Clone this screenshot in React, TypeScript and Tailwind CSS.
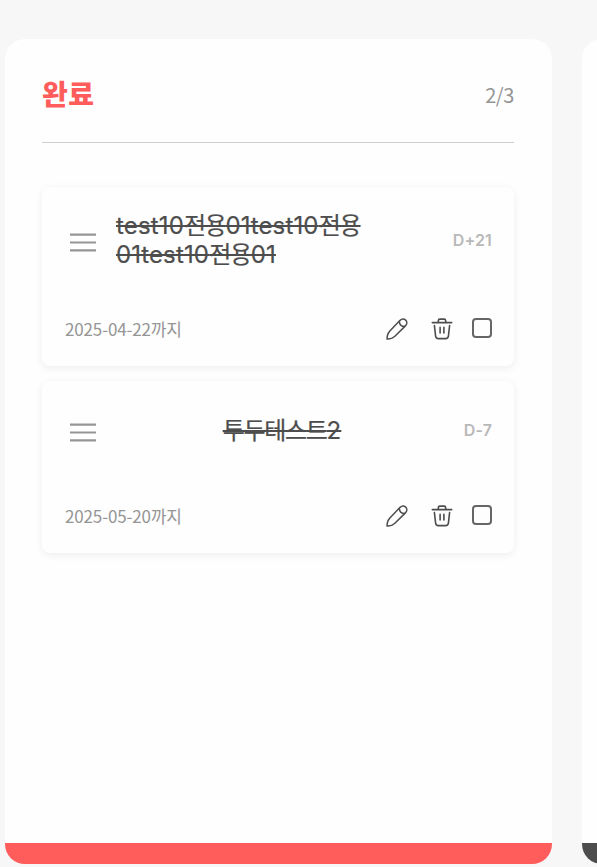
interface Todo {
  id: number;
  title: string;
  due: string;
  dday: string;
}

const todos: Todo[] = [
  { id: 1, title: 'test10전용01test10전용01test10전용01', due: '2025-04-22', dday: 'D+21' },
  { id: 2, title: '투두테스트2', due: '2025-05-20', dday: 'D-7' },
];

function MenuIcon() {
  return (
    <svg width="28" height="20" viewBox="0 0 28 20" fill="none" stroke="#959595" strokeWidth="2.2">
      <path d="M1 1.7h26M1 9.5h26M1 17.3h26" />
    </svg>
  );
}

function PencilIcon() {
  return (
    <svg width="24" height="24" viewBox="0 0 24 24" fill="none" stroke="#4d4d4d" strokeWidth="1.5" strokeLinejoin="round">
      <path d="M2 22c.1-2.700.5-5.500 2.400-7.400L14.800 3.600c1.900-1.900 4.200-2 5.900-.5 1.600 1.600 1.500 4-.3 5.800L9.900 19.300C7.900 21.300 5 22.200 2 22z" />
      <path d="M14.300 4.200c.1 3.200 2.400 5.300 5.600 5.300" />
    </svg>
  );
}

function TrashIcon() {
  return (
    <svg width="24" height="24" viewBox="0 0 24 24" fill="none" stroke="#4d4d4d" strokeWidth="1.6" strokeLinecap="round" strokeLinejoin="round">
      <path d="M2.300 5.600h19.400" />
      <path d="M8.300 5.300V3.700c0-1 .6-1.600 1.600-1.600h4.200c1 0 1.600.6 1.600 1.600v1.600" />
      <path d="M4.400 8.500l1.200 10.700c.2 1.700 1 2.400 2.700 2.400h7.400c1.700 0 2.500-.7 2.700-2.400l1.200-10.700" />
      <path d="M10.100 10.400v5.500M13.900 10.400v5.500" />
    </svg>
  );
}

// Hangul runs are set tighter than the latin ones
function TodoTitle({ text }: { text: string }) {
  return (
    <>
      {text.split(/([가-힣]+)/).map((part, i) =>
        i % 2 === 1 ? (
          <span key={i} className="tracking-[-1.3px]">
            {part}
          </span>
        ) : (
          part
        )
      )}
    </>
  );
}

function TodoCard({ todo }: { todo: Todo }) {
  return (
    <li className="rounded-lg bg-[#fefefe] px-[22px] pt-6 shadow-[0_2px_8px_rgba(0,0,0,0.07)]">
      <div className="flex min-h-[51px] items-center">
        <button className="mt-[5px] ml-[5px] shrink-0">
          <MenuIcon />
        </button>
        <div className="ml-[19px] flex w-[332px] shrink-0 justify-center">
          <p className="font-['Inter','Noto_Sans_CJK_KR',sans-serif] text-2xl leading-[29px] font-normal tracking-[0.15px] text-[#4d4d4d] line-through decoration-2 [-webkit-text-stroke:0.2px_#4d4d4d]">
            <TodoTitle text={todo.title} />
          </p>
        </div>
        <span className="ml-auto shrink-0 pb-px font-['Inter',sans-serif] text-base font-semibold tracking-[0.15px] text-[#b8b8b8]">
          {todo.dday}
        </span>
      </div>
      <div className="mt-12 flex h-[49px] items-start justify-between">
        <span className="ml-px text-[17px] leading-6 tracking-[-0.15px] text-[#959595]">{todo.due}까지</span>
        <div className="flex items-start">
          <button>
            <PencilIcon />
          </button>
          <button className="ml-[21px]">
            <TrashIcon />
          </button>
          <button className="mt-px ml-[18px] size-5 rounded-[4px] border-2 border-[#666]" />
        </div>
      </div>
    </li>
  );
}

export default function App() {
  return (
    <div className="flex h-[867px] w-full gap-[30px] overflow-hidden bg-[#f7f7f7] pt-[39px] pl-[5px] font-['Noto_Sans_CJK_KR',sans-serif]">
      <section className="flex h-[825px] w-[547px] shrink-0 flex-col overflow-hidden rounded-[20px] bg-[#fefefe]">
        <div className="flex-1 pr-[38px] pl-[37px]">
          <header className="flex h-[104px] items-center justify-between border-b border-[#cfcfcf] pt-[7px]">
            <h2 className="pb-0.5 text-[28px] font-black tracking-[0.4px] text-[#ff5c5c]">완료</h2>
            <span className="pt-0.5 text-xl tracking-[-0.4px] text-[#959595]">2/3</span>
          </header>
          <ul className="mt-11 flex flex-col gap-[15px]">
            {todos.map((todo) => (
              <TodoCard key={todo.id} todo={todo} />
            ))}
          </ul>
        </div>
        <div className="h-[21px] bg-[#ff5c5c]" />
      </section>

      {/* next column */}
      <section className="flex h-[825px] w-[547px] shrink-0 flex-col overflow-hidden rounded-[20px] bg-[#fefefe]">
        <div className="flex-1" />
        <div className="h-[21px] bg-[#4d4d4d]" />
      </section>
    </div>
  );
}
